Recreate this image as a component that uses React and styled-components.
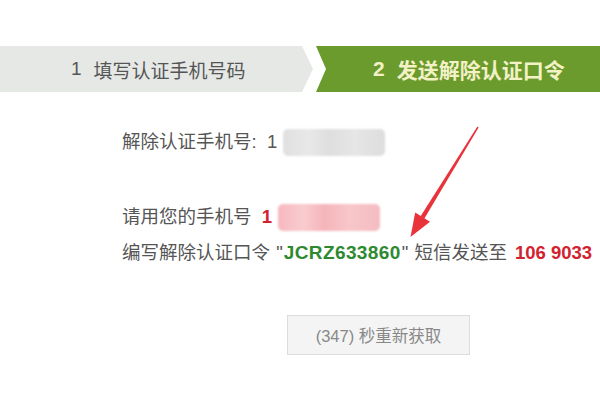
import React from 'react';
import styled, { createGlobalStyle } from 'styled-components';

const Global = createGlobalStyle`
  html, body {
    margin: 0;
    padding: 0;
    background: #ffffff;
    overflow: hidden;
  }
  body {
    font-family: "Liberation Sans", "Noto Sans CJK SC", sans-serif;
    color: #555555;
  }
`;

const Page = styled.div`
  position: relative;
  width: 600px;
  height: 400px;
  overflow: hidden;
`;

const Steps = styled.div`
  display: flex;
  margin-top: 46px;
  height: 46px;
`;

const Step = styled.div`
  display: flex;
  align-items: center;
  box-sizing: border-box;
  height: 100%;
  font-size: ${p => (p.$active ? '21px' : '19px')};
  font-weight: ${p => (p.$active ? 'bold' : 'normal')};
  color: ${p => (p.$active ? '#f3f1c6' : '#555555')};
  background: ${p => (p.$active ? '#6a9b2c' : '#e5e8e5')};
  white-space: nowrap;
`;

const FirstStep = styled(Step)`
  width: 313px;
  padding-left: 71px;
  clip-path: polygon(0 0, 302px 0, 313px 50%, 302px 100%, 0 100%);
`;

const SecondStep = styled(Step)`
  flex: 1;
  margin-left: 3px;
  padding-left: 57px;
  clip-path: polygon(0 0, 100% 0, 100% 100%, 0 100%, 10px 50%);
`;

const Num = styled.span`
  margin-right: 12px;
`;

const Content = styled.div`
  padding-left: 122px;
  padding-top: 32px;
`;

const Line = styled.div`
  height: 36px;
  line-height: 36px;
  font-size: 18.5px;
  white-space: nowrap;
  display: flex;
  align-items: center;
  margin-top: ${p => p.$gap || 0}px;
`;

const Mask = styled.span`
  display: inline-block;
  width: 102px;
  height: 27px;
  margin-left: ${p => p.$offset || 0}px;
  border-radius: 5px;
  filter: blur(1px);
  background: ${p =>
    p.$pink
      ? 'linear-gradient(90deg, #f6b8bd 0%, #f9ccd0 25%, #f5b5ba 45%, #f8c6ca 70%, #f4bcc1 100%)'
      : 'linear-gradient(90deg, #e0e0e0 0%, #e8e8e8 25%, #dedede 45%, #e6e6e6 70%, #dddddd 100%)'};
`;

const Red = styled.span`
  color: #d3222f;
  font-weight: bold;
  font-size: 18.5px;
  margin-left: ${p => p.$offset || 0}px;
`;

const Code = styled.span`
  color: #2e8a30;
  font-weight: bold;
  font-size: 19px;
  letter-spacing: 0.4px;
`;

const Quote = styled.span`
  margin: 0 1px;
`;

const ButtonRow = styled.div`
  padding-left: 287px;
  margin-top: 44px;
`;

const RetryButton = styled.button`
  width: 183px;
  height: 40px;
  background: #f4f4f4;
  border: 1px solid #dcdcdc;
  color: #888888;
  font-size: 16.5px;
  font-family: "Liberation Sans", "Noto Sans CJK SC", sans-serif;
  padding: 0;
`;

const Arrow = styled.svg`
  position: absolute;
  left: 0;
  top: 0;
  pointer-events: none;
`;

export default function App() {
  return (
    <Page>
      <Global />
      <Steps>
        <FirstStep>
          <Num>1</Num>填写认证手机号码
        </FirstStep>
        <SecondStep $active>
          <Num>2</Num>发送解除认证口令
        </SecondStep>
      </Steps>
      <Content>
        <Line>
          解除认证手机号:&nbsp;&nbsp;1<Mask $offset={6} />
        </Line>
        <Line $gap={39}>
          请用您的手机号&nbsp;&nbsp;<Red>1</Red>
          <Mask $pink $offset={6} />
        </Line>
        <Line>
          编写解除认证口令&nbsp;<Quote>"</Quote>
          <Code>JCRZ633860</Code>
          <Quote>"</Quote>&nbsp;短信发送至
          <Red $offset={8}>106 9033</Red>
        </Line>
      </Content>
      <ButtonRow>
        <RetryButton>(347) 秒重新获取</RetryButton>
      </ButtonRow>
      <Arrow width="600" height="400" viewBox="0 0 600 400">
        <polygon
          points="478.6,127.4 477.4,126.6 420.6,216.2 424.4,218.6"
          fill="#e8333b"
        />
        <polygon
          points="410.5,237 415.2,212.6 430,221.8"
          fill="#e8333b"
        />
      </Arrow>
    </Page>
  );
}
